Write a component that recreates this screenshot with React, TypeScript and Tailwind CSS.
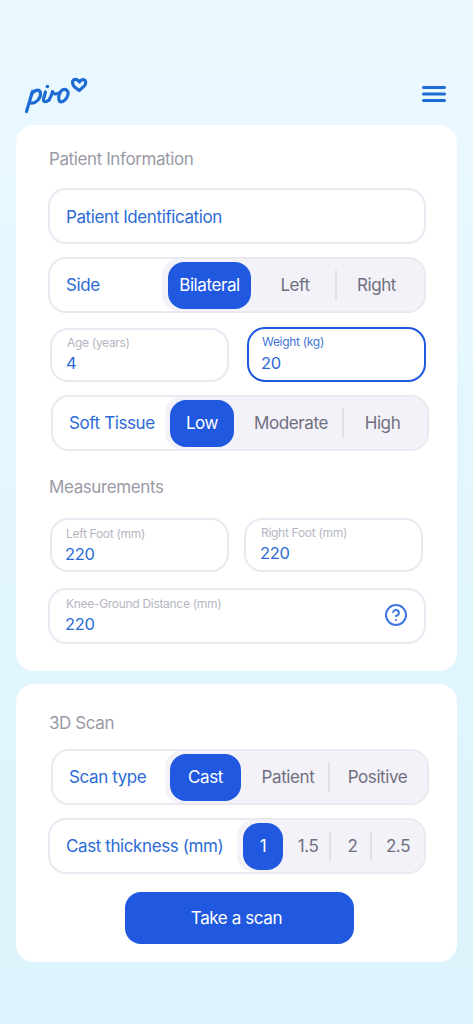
import { CircleHelp } from 'lucide-react';

type Cell = { text: string; width: string; active?: boolean; divider?: boolean };

function Logo() {
  return (
    <svg width="70" height="40" viewBox="0 0 70 40" fill="none" stroke="#1f6bd4" strokeLinecap="round" strokeLinejoin="round">
      <g strokeWidth="3.2">
        {/* p */}
        <path d="M2.5 37.5 L8.5 17.5" />
        <path d="M7.5 20 C10 16 15.5 14.5 16.5 19 C17.2 24 12 30 6.5 29" />
        {/* i */}
        <path d="M21.5 18 L19.5 25 C19 28.5 22 28.5 25 26" />
        {/* r */}
        <path d="M25 26 C27 23 28 20 28.5 17.5 C29.5 20.5 31 20.5 35 19" />
        {/* o */}
        <path d="M39.5 15.5 C35.5 16.5 33.5 24 35.5 27 C38 29.5 43 25.5 44 20.5 C44.6 16.5 42 15 39.5 15.5 Z" />
      </g>
      <circle cx="23.4" cy="12.5" r="1.8" fill="#1f6bd4" stroke="none" />
      {/* heart */}
      <path
        d="M49.5 6 C51.5 4.5 53.8 5.6 55.5 8 C57 6 59 4.8 61 6.4 C62.5 8 61.6 10.6 59.8 12.4 L55.2 16.6 L50.6 13 C48.4 11 47.8 7.6 49.5 6 Z"
        strokeWidth="3.2"
      />
    </svg>
  );
}

function Heading({ children, className }: { children: string; className: string }) {
  return <div className={`text-[17px] tracking-[-0.4px] leading-[20px] text-[#9a9aa6] pl-[33px] ${className}`}>{children}</div>;
}

function Field({ label, value, className, focused }: { label: string; value: string; className: string; focused?: boolean }) {
  return (
    <div className={`border-2 rounded-[18px] bg-white ${focused ? 'border-[#2059e0]' : 'border-[#eae8f1]'} ${className}`}>
      <div className={`text-[12px] tracking-[-0.3px] leading-[16px] ${focused ? 'text-[#3f74d8]' : 'text-[#b6b6c2]'}`}>{label}</div>
      <div className={`text-[16.5px] tracking-[-0.3px] leading-[20px] -ml-[1px] text-[#2b6bd6] ${focused ? 'mt-[3px]' : 'mt-[2px]'}`}>{value}</div>
    </div>
  );
}

function Segmented({ label, cells, pad, labelWidth, className }: { label: string; cells: Cell[]; pad: string; labelWidth: string; className: string }) {
  return (
    <div className={`h-[56px] border-2 border-[#eae8f1] rounded-[18px] bg-white flex overflow-hidden ${className}`}>
      <div className={`flex items-center text-[17px] tracking-[-0.4px] text-[#2b6bd6] pl-[16px] pt-[2px] ${labelWidth}`}>{label}</div>
      <div className={`flex-1 flex items-center bg-[#f3f2f9] rounded-l-[16px] ${pad}`}>
        {cells.map((c) =>
          c.active ? (
            <div key={c.text} className={`h-[47px] pt-[2px] rounded-[16px] bg-[#2059e0] text-white text-[17px] tracking-[-0.4px] flex items-center justify-center ${c.width}`}>
              {c.text}
            </div>
          ) : (
            <div key={c.text} className={`h-[30px] pt-[2px] text-[17px] tracking-[-0.4px] text-[#6f6f80] flex items-center justify-center ${c.width} ${c.divider ? 'border-l-2 border-[#e2e1ea]' : ''}`}>
              {c.text}
            </div>
          ),
        )}
      </div>
    </div>
  );
}

export default function App() {
  return (
    <div className="h-[1024px] w-[473px] overflow-hidden bg-gradient-to-b from-[#ebf9ff] to-[#dbf3fc] font-['Inter',sans-serif]">
      <header className="flex items-center justify-between pl-[24px] pr-[27px] pt-[74px] pb-[11px]">
        <Logo />
        <svg width="24" height="16" viewBox="0 0 24 16" fill="none" stroke="#1f6bd4" strokeWidth="3" strokeLinecap="round">
          <path d="M1.5 1.5 H22.5 M1.5 8 H22.5 M1.5 14.5 H22.5" />
        </svg>
      </header>

      <section className="mx-[16px] h-[546px] rounded-[18px] bg-white pt-[24px]">
        <Heading className="">Patient Information</Heading>
        <div className="mt-[19px] ml-[32px] w-[378px] h-[56px] border-2 border-[#eae8f1] rounded-[18px] pl-[16px] pt-[3px] flex items-center text-[17px] tracking-[-0.4px] text-[#2b6bd6]">
          Patient Identification
        </div>
        <Segmented
          className="mt-[13px] ml-[32px] w-[378px]"
          label="Side"
          labelWidth="w-[112px]"
          pad="pl-[6px]"
          cells={[
            { text: 'Bilateral', width: 'w-[83px]', active: true },
            { text: 'Left', width: 'w-[84px] pl-[4px]' },
            { text: 'Right', width: 'w-[89px] pr-[8px]', divider: true },
          ]}
        />
        <div className="mt-[14px] ml-[34px] flex items-end gap-[18px]">
          <Field className="w-[179px] h-[54px] pl-[15px] pt-[5px]" label="Age (years)" value="4" />
          <Field className="w-[179px] h-[55px] pl-[13px] pt-[5px]" label="Weight (kg)" value="20" focused />
        </div>
        <Segmented
          className="mt-[13px] ml-[35px] w-[378px]"
          label="Soft Tissue"
          labelWidth="w-[112px]"
          pad="pl-[5px]"
          cells={[
            { text: 'Low', width: 'w-[64px]', active: true },
            { text: 'Moderate', width: 'w-[108px] pl-[6px]' },
            { text: 'High', width: 'w-[85px] pr-[6px]', divider: true },
          ]}
        />
        <Heading className="mt-[25px] pt-[1px]">Measurements</Heading>
        <div className="mt-[21px] ml-[34px] flex gap-[15px]">
          <Field className="w-[179px] h-[54px] pl-[14px] pt-[6px]" label="Left Foot (mm)" value="220" />
          <Field className="w-[179px] h-[54px] pl-[15px] pt-[5px]" label="Right Foot (mm)" value="220" />
        </div>
        <div className="relative mt-[16px] ml-[32px] w-[378px]">
          <Field className="w-full h-[56px] pl-[16px] pt-[6px]" label="Knee-Ground Distance (mm)" value="220" />
          <CircleHelp className="absolute right-[18px] top-[15px] text-[#3f78e0]" size={24} strokeWidth={2} />
        </div>
      </section>

      <section className="mx-[16px] mt-[13px] h-[278px] rounded-[18px] bg-white pt-[29px]">
        <Heading className="">3D Scan</Heading>
        <Segmented
          className="mt-[16px] ml-[35px] w-[378px]"
          label="Scan type"
          labelWidth="w-[112px]"
          pad="pl-[5px]"
          cells={[
            { text: 'Cast', width: 'w-[71px]', active: true },
            { text: 'Patient', width: 'w-[87px] pl-[7px]' },
            { text: 'Positive', width: 'w-[99px] pr-[2px]', divider: true },
          ]}
        />
        <Segmented
          className="mt-[13px] ml-[32px] w-[378px]"
          label="Cast thickness (mm)"
          labelWidth="w-[187px]"
          pad="pl-[6px]"
          cells={[
            { text: '1', width: 'w-[40px]', active: true },
            { text: '1.5', width: 'w-[46px] pl-[4px]' },
            { text: '2', width: 'w-[41px] pl-[4px]', divider: true },
            { text: '2.5', width: 'w-[54px]', divider: true },
          ]}
        />
        <button className="block mt-[18px] ml-[109px] w-[229px] h-[52px] pr-[6px] pt-[2px] rounded-[16px] bg-[#2059e0] text-white text-[17px] tracking-[-0.4px]">
          Take a scan
        </button>
      </section>
    </div>
  );
}
